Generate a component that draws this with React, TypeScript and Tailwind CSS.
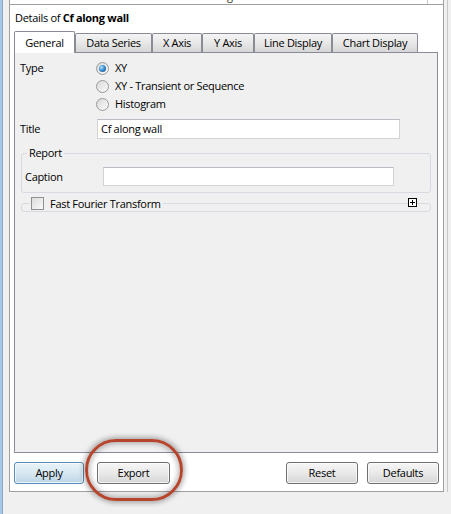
import type { ReactNode } from 'react'

type TabProps = { label: string; width: string; active?: boolean }

function Tab({ label, width, active }: TabProps) {
  if (active) {
    return (
      <div
        className={`relative z-10 -mb-px flex h-[22px] items-center justify-center rounded-t-[2px] border border-b-0 border-[#898c95] bg-white ${width}`}
      >
        {label}
      </div>
    )
  }
  return (
    <div
      className={`flex h-[19px] items-center justify-center rounded-t-[2px] border border-b-0 border-[#898c95] bg-gradient-to-b from-[#f4f4f4] via-[#e8e8e8] to-[#d6d6d6] ${width}`}
    >
      {label}
    </div>
  )
}

function Radio({ checked }: { checked?: boolean }) {
  return (
    <div className="flex h-[13px] w-[13px] items-center justify-center rounded-full border border-[#9a9a9a] bg-gradient-to-br from-[#d8d8d8] to-[#fbfbfb]">
      {checked && (
        <div className="h-[7px] w-[7px] rounded-full bg-[radial-gradient(circle_at_35%_35%,#b4e2fa_0%,#3b8fd0_45%,#12467c_100%)]" />
      )}
    </div>
  )
}

function Checkbox() {
  return (
    <div className="h-[13px] w-[13px] border border-[#8f8f8f] bg-gradient-to-br from-[#dcdcdc] to-[#fafafa]" />
  )
}

type ButtonProps = { children: ReactNode; width: string; primary?: boolean; className?: string }

function WinButton({ children, width, primary, className = '' }: ButtonProps) {
  const face = primary
    ? 'border-[#5a8cb6] from-[#e8f3f9] via-[#d8e8f2] to-[#bcd4e5]'
    : 'border-[#707070] from-[#f6f6f6] via-[#e9e9e9] to-[#d6d6d6]'
  return (
    <button
      type="button"
      className={`flex h-[22px] items-center justify-center rounded-[3px] border bg-gradient-to-b shadow-[inset_0_0_0_1px_rgba(255,255,255,0.7)] ${face} ${width} ${className}`}
    >
      {children}
    </button>
  )
}

function TextBox({ value = '', width, height }: { value?: string; width: string; height: string }) {
  return (
    <div
      className={`flex items-center border border-[#d0d3d8] border-t-[#b9bcc2] bg-white pl-[3px] ${width} ${height}`}
    >
      {value}
    </div>
  )
}

export default function App() {
  return (
    <div className="relative flex h-[514px] w-[451px] overflow-hidden bg-[#f0f0f0] font-['Open_Sans',sans-serif] text-[11px] leading-[16px] tracking-[-0.3px] text-black">
      {/* window frame, left */}
      <div className="w-[2px] bg-[#a9c8e8]" />
      <div className="w-px bg-[#8aa7c4]" />
      <div className="w-[6px] bg-[#f0f0f0]" />

      {/* properties panel */}
      <div className="flex h-[492px] w-[435px] flex-col border-x border-b border-[#a0a0a0] bg-white">
        {/* bottom edge of the tree view above */}
        <div className="flex h-[5px] overflow-hidden border-b border-[#a0a0a0]">
          <div className="flex-1 overflow-hidden border-r border-[#c8c8c8] pl-[50px]">
            <div className="-mt-[12px] flex gap-[8px] whitespace-nowrap text-[#333]">
              <span>K</span>
              <span className="text-[#d02020]">?</span>
              <span>Plane 2 // Wall Shear / CfAlongWall.csv</span>
            </div>
          </div>
          <div className="w-[15px]" />
        </div>

        <div className="mt-[5px] h-[16px] pl-[5px]">
          Details of <span className="font-bold">Cf along wall</span>
        </div>

        {/* tab strip */}
        <div className="mt-[5px] flex h-[21px] items-end pl-[4px]">
          <Tab label="General" width="w-[61px]" active />
          <Tab label="Data Series" width="w-[77px]" />
          <Tab label="X Axis" width="w-[50px]" />
          <Tab label="Y Axis" width="w-[52px]" />
          <Tab label="Line Display" width="w-[78px]" />
          <Tab label="Chart Display" width="w-[86px]" />
        </div>

        {/* tab page */}
        <div className="ml-[4px] h-[401px] w-[424px] border border-[#898c95] bg-[#f0f0f0]">
          <div className="flex pl-[5px] pt-[6px]">
            <div className="flex h-[18px] w-[76px] items-center">Type</div>
            <div className="flex flex-col">
              <div className="flex h-[18px] items-center gap-[6px]">
                <Radio checked />
                <span>XY</span>
              </div>
              <div className="flex h-[18px] items-center gap-[6px]">
                <Radio />
                <span>XY - Transient or Sequence</span>
              </div>
              <div className="flex h-[18px] items-center gap-[6px]">
                <Radio />
                <span>Histogram</span>
              </div>
            </div>
          </div>

          <div className="mt-[6px] flex h-[20px] items-center pl-[5px]">
            <div className="w-[77px]">Title</div>
            <TextBox value="Cf along wall" width="w-[303px]" height="h-[20px]" />
          </div>

          <fieldset className="ml-[6px] mt-[6px] w-[410px] rounded-[3px] border border-[#d5dbe0]">
            <legend className="ml-[5px] px-[2px] leading-[16px]">Report</legend>
            <div className="flex items-center pb-[6px] pl-[3px] pt-[6px]">
              <div className="w-[78px]">Caption</div>
              <TextBox width="w-[291px]" height="h-[19px]" />
            </div>
          </fieldset>

          <div className="relative ml-[6px] mt-[3px] w-[410px]">
            <fieldset className="rounded-[3px] border border-[#d5dbe0]">
              <legend className="ml-[7px] flex h-[15px] items-center gap-[6px] px-[2px]">
                <Checkbox />
                <span>Fast Fourier Transform</span>
              </legend>
            </fieldset>
            <div className="absolute right-[14px] top-[2px] flex h-[9px] w-[9px] items-center justify-center border border-black bg-white">
              <svg width="7" height="7" viewBox="0 0 7 7">
                <path d="M1 3.5h5M3.5 1v5" stroke="#000" strokeWidth="1" />
              </svg>
            </div>
          </div>
        </div>

        {/* action buttons */}
        <div className="mt-[9px] flex pl-[4px] pr-[4px]">
          <WinButton width="w-[70px]" primary>
            Apply
          </WinButton>
          <WinButton width="w-[73px]" className="ml-[13px]">
            Export
          </WinButton>
          <WinButton width="w-[72px]" className="ml-auto">
            Reset
          </WinButton>
          <WinButton width="w-[72px]" className="ml-[9px]">
            Defaults
          </WinButton>
        </div>
      </div>

      {/* window frame, right */}
      <div className="w-[3px]" />
      <div className="h-[492px] w-px bg-[#c8c8c8]" />

      {/* highlight ring around Export */}
      <div className="pointer-events-none absolute left-[85px] top-[439px] h-[62px] w-[98px] rounded-[31px] border-[3px] border-[#b5462d] shadow-[0_0_5px_2px_rgba(0,0,0,0.3),inset_0_0_5px_2px_rgba(0,0,0,0.25)]" />
    </div>
  )
}
